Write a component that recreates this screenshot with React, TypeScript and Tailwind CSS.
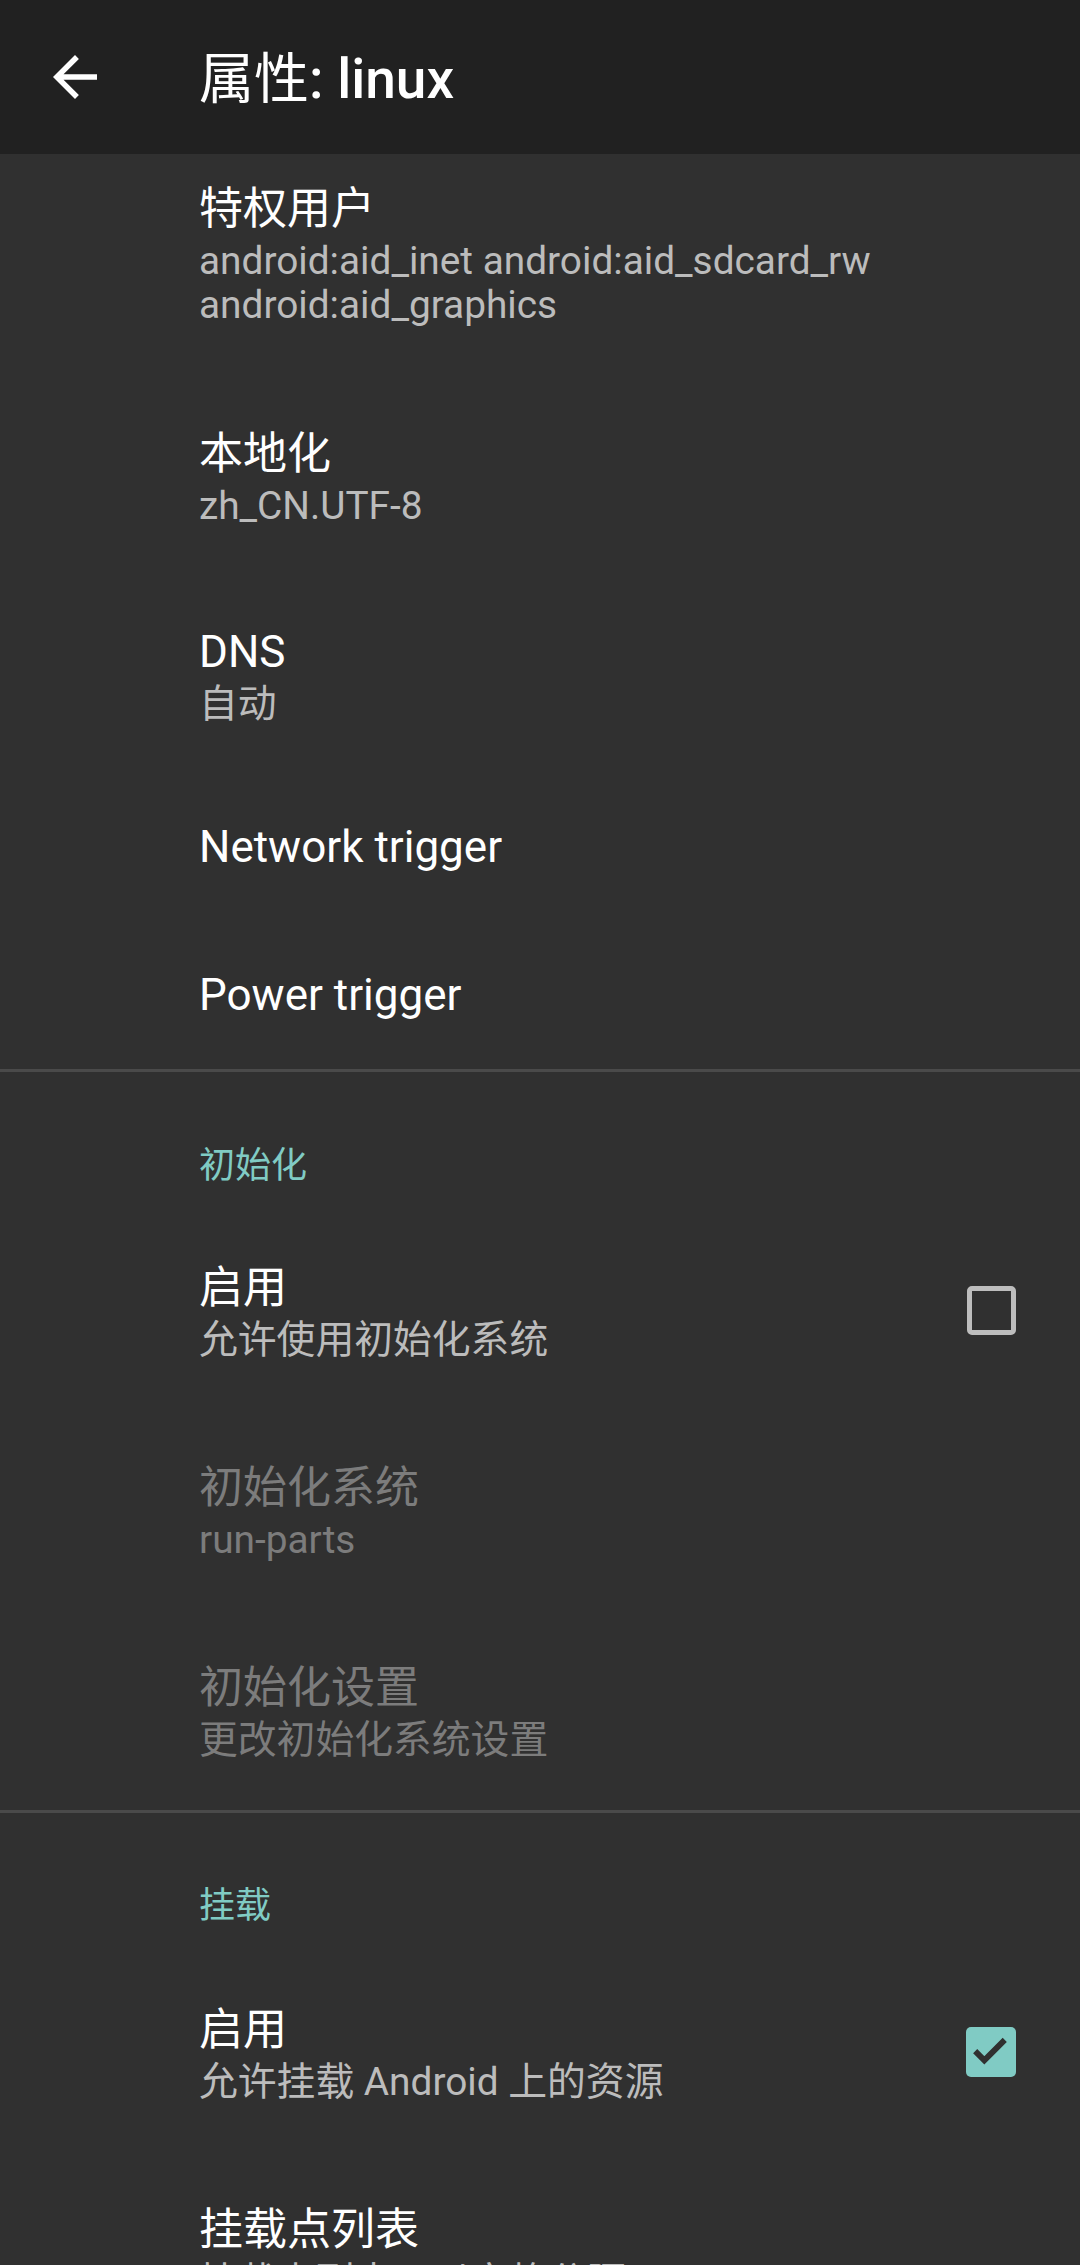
import React from 'react'

const font = { fontFamily: 'Roboto, "Noto Sans CJK SC", sans-serif' }

const Row = ({ title, summary, h = 'h-[200px]', disabled, check }: any) => {
  const titleColor = disabled ? 'text-[#7c7c7c]' : 'text-white'
  const sumColor = disabled ? 'text-[#7c7c7c]' : 'text-[#bcbcbc]'
  return (
    <div className={`${h} flex items-center pl-[199px]`}>
      <div className="flex-1 flex flex-col">
        <div className={`text-[44px] leading-[60px] ${titleColor}`}>{title}</div>
        {summary && <div className={`text-[38.8px] leading-[44px] ${sumColor}`}>{summary}</div>}
      </div>
      {check === false && (
        <div className="mr-[64px] w-[49px] h-[49px] rounded-[5px] border-[5px] border-[#bdbdbd]" />
      )}
      {check === true && (
        <div className="mr-[64px] w-[50px] h-[50px] rounded-[5px] bg-[#80cbc4] flex items-center justify-center">
          <svg viewBox="0 0 24 24" className="w-[50px] h-[50px]">
            <path d="M4.4 11.6l4.4 4.4 9.8-9.8" fill="none" stroke="#303030" strokeWidth="2.8" />
          </svg>
        </div>
      )}
    </div>
  )
}

const Category = ({ label, h, pt }: any) => (
  <div className={`${h} ${pt} pl-[199px]`}>
    <div className="text-[36px] leading-[44px] text-[#80cbc4]">{label}</div>
  </div>
)

const Divider = () => <div className="h-[3px] bg-[#4a4a4a]" />

export default function App() {
  return (
    <div style={font} className="w-[1080px] h-[2265px] overflow-hidden bg-[#303030]">
      <div className="h-[154px] bg-[#212121] flex items-center">
        <svg viewBox="0 0 24 24" className="ml-[42px] w-[66px] h-[66px]" fill="#ffffff">
          <path d="M20 11H7.83l5.59-5.59L12 4l-8 8 8 8 1.41-1.41L7.83 13H20v-2z" />
        </svg>
        <div className="ml-[91px] mt-[5px] text-[55px] leading-none text-white">
          属性<span className="font-medium">: linux</span>
        </div>
      </div>

      <div className="h-[223px] flex flex-col justify-end pb-[50px] pl-[199px]">
        <div className="text-[44px] leading-[60px] text-white">特权用户</div>
        <div className="text-[38.8px] leading-[44px] text-[#bcbcbc]">
          <div>android:aid_inet android:aid_sdcard_rw</div>
          <div>android:aid_graphics</div>
        </div>
      </div>
      <Row h="h-[198px]" title="本地化" summary="zh_CN.UTF-8" />
      <Row h="h-[198px]" title="DNS" summary="自动" />
      <Row h="h-[148px]" title="Network trigger" />
      <Row h="h-[148px]" title="Power trigger" />
      <Divider />

      <Category label="初始化" h="h-[138px]" pt="pt-[72px]" />
      <Row title="启用" summary="允许使用初始化系统" check={false} />
      <Row title="初始化系统" summary="run-parts" disabled />
      <Row title="初始化设置" summary="更改初始化系统设置" disabled />
      <Divider />

      <Category label="挂载" h="h-[139px]" pt="pt-[71px]" />
      <Row title="启用" summary="允许挂载 Android 上的资源" check={true} />
      <Row title="挂载点列表" summary="挂载点列表，以空格分隔" />
    </div>
  )
}
